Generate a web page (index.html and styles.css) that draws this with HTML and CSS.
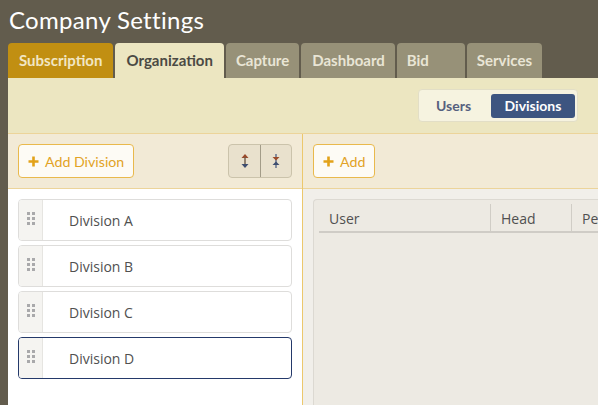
FILE: index.html
```html
<!DOCTYPE html>
<html>
<head>
<meta charset="utf-8">
<link rel="stylesheet" href="styles.css">
</head>
<body>
<h1 class="title">Company Settings</h1>
<div class="tabs">
  <div class="tab tab-sub">Subscription</div>
  <div class="tab tab-active">Organization</div>
  <div class="tab">Capture</div>
  <div class="tab tab-dash">Dashboard</div>
  <div class="tab">Bid</div>
  <div class="tab">Services</div>
</div>
<div class="panel">
  <div class="topbar">
    <div class="toggle">
      <span class="toggle-btn">Users</span>
      <span class="toggle-btn toggle-on">Divisions</span>
    </div>
  </div>
  <div class="main">
    <div class="left">
      <div class="toolbar">
        <button class="add-btn"><svg class="plus" width="11" height="11" viewBox="0 0 11 11"><path d="M5.5 0.5 V10.5 M0.5 5.5 H10.5" stroke="#e2a21a" stroke-width="2.6"/></svg>Add Division</button>
        <div class="sort-group">
          <button class="sort-btn">
            <svg width="10" height="16" viewBox="0 0 10 16"><path d="M5 1 L8.5 5 H1.5 Z" fill="#9a4a2a"/><rect x="4.3" y="4" width="1.4" height="8" fill="#6b5a4a"/><path d="M5 15 L8.5 11 H1.5 Z" fill="#3e4e70"/></svg>
          </button>
          <button class="sort-btn">
            <svg width="10" height="16" viewBox="0 0 10 16"><rect x="4.3" y="1" width="1.4" height="14" fill="#5a6a8a"/><path d="M1.5 4 H8.5 L5 7.5 Z" fill="#9a4a2a"/><path d="M1.5 12 H8.5 L5 8.5 Z" fill="#3e4e70"/></svg>
          </button>
        </div>
      </div>
      <div class="list">
        <div class="item"><span class="handle"><i></i><i></i><i></i><i></i><i></i><i></i></span><span class="item-name">Division A</span></div>
        <div class="item"><span class="handle"><i></i><i></i><i></i><i></i><i></i><i></i></span><span class="item-name">Division B</span></div>
        <div class="item"><span class="handle"><i></i><i></i><i></i><i></i><i></i><i></i></span><span class="item-name">Division C</span></div>
        <div class="item item-selected"><span class="handle"><i></i><i></i><i></i><i></i><i></i><i></i></span><span class="item-name">Division D</span></div>
      </div>
    </div>
    <div class="right">
      <div class="toolbar">
        <button class="add-btn"><svg class="plus" width="11" height="11" viewBox="0 0 11 11"><path d="M5.5 0.5 V10.5 M0.5 5.5 H10.5" stroke="#e2a21a" stroke-width="2.6"/></svg>Add</button>
      </div>
      <div class="content">
        <div class="table">
          <div class="thead">
            <div class="th th-user">User</div>
            <div class="th th-head">Head</div>
            <div class="th th-per">Permissions</div>
          </div>
        </div>
      </div>
    </div>
  </div>
</div>
</body>
</html>
```
FILE: styles.css
```css
* { box-sizing: border-box; }
html, body { margin: 0; padding: 0; }
body {
  background: #625c4d;
  font-family: Lato, "Open Sans", sans-serif;
  width: 598px;
  height: 405px;
  overflow: hidden;
}
.title {
  margin: 0;
  height: 43px;
  padding: 5px 0 0 9px;
  font-weight: 400;
  font-size: 24px;
  line-height: 30px;
  color: #ffffff;
  letter-spacing: 0.3px;
}
.tabs {
  display: flex;
  gap: 2px;
  margin-left: 8px;
  height: 35px;
}
.tab {
  height: 35px;
  padding: 0 10px;
  min-width: 68px;
  border-radius: 4px 4px 0 0;
  background: #979178;
  color: #e9e5d5;
  font-weight: 700;
  font-size: 15px;
  line-height: 35px;
  white-space: nowrap;
}
.tab-sub { background: #c18f12; color: #f1e6c4; padding: 0 11px; }
.tab-dash { padding: 0 10px 0 11px; }
.tab-active { background: #ece6c1; color: #4b4a44; padding: 0 11px; }
.panel {
  margin-left: 8px;
  background: #ece6c1;
  height: 327px;
  display: flex;
  flex-direction: column;
}
.topbar {
  height: 56px;
  border-bottom: 1px solid #ecd49a;
  display: flex;
  justify-content: flex-end;
  align-items: flex-start;
  padding: 11px 20px 0 0;
}
.toggle {
  display: flex;
  align-items: center;
  width: 160px;
  height: 33px;
  background: #f6f3e0;
  border: 1px solid #e2dec6;
  border-radius: 4px;
  padding: 0 2px 0 4px;
  justify-content: space-between;
}
.toggle-btn {
  font-weight: 700;
  font-size: 14px;
  color: #55607e;
  padding: 0 13px;
  line-height: 24px;
  height: 24px;
}
.toggle-on {
  background: #3d5580;
  color: #ffffff;
  border-radius: 3px;
  width: 84px;
  text-align: center;
  padding: 0;
}
.main {
  flex: 1;
  display: flex;
  min-height: 0;
}
.left {
  width: 295px;
  border-right: 1px solid #ecc86c;
  background: #ffffff;
  display: flex;
  flex-direction: column;
}
.right {
  flex: 1;
  background: #f1efea;
  display: flex;
  flex-direction: column;
  min-width: 0;
}
.toolbar {
  height: 55px;
  background: #f2ead6;
  border-bottom: 1px solid #ecd49a;
  display: flex;
  align-items: center;
  justify-content: space-between;
  padding: 0 10px 0 10px;
}
.add-btn {
  height: 34px;
  padding: 0 9px 0 9px;
  background: #fdfbf5;
  border: 1px solid #e9b94c;
  border-radius: 4px;
  color: #e2a326;
  font-family: Lato, "Open Sans", sans-serif;
  font-size: 14.2px;
  display: flex;
  align-items: center;
  gap: 6px;
}
.plus { display: block; }
.sort-group {
  display: flex;
  height: 34px;
  border: 1px solid #cbc3ab;
  border-radius: 4px;
  background: #e9e1cd;
  overflow: hidden;
}
.sort-btn {
  width: 31px;
  height: 100%;
  border: 0;
  background: transparent;
  display: flex;
  align-items: center;
  justify-content: center;
  padding: 0;
}
.sort-btn + .sort-btn { border-left: 1px solid #a39c88; }
.list {
  padding: 10px 10px 0 10px;
  display: flex;
  flex-direction: column;
  gap: 4px;
}
.item {
  height: 42px;
  border: 1px solid #dedddb;
  border-radius: 4px;
  display: flex;
  align-items: stretch;
  overflow: hidden;
  background: #ffffff;
}
.item-selected { border-color: #24396a; }
.handle {
  width: 24px;
  background: #f5f4f1;
  border-right: 1px solid #e6e5e1;
  display: grid;
  grid-template-columns: 3px 3px;
  grid-auto-rows: 3px;
  gap: 2px;
  align-content: start;
  justify-content: center;
  padding-top: 12px;
}
.handle i {
  display: block;
  background: #a9a9ab;
}
.item-name {
  padding-left: 26px;
  line-height: 42px;
  color: #505050;
  font-family: "Open Sans", Lato, sans-serif;
  font-size: 14px;
}
.content {
  flex: 1;
  padding: 10px 0 0 10px;
}
.table {
  height: 100%;
  background: #edeae3;
  border: 1px solid #dcd9d2;
  border-right: 0;
  border-bottom: 0;
  border-radius: 4px 0 0 0;
  padding: 4px 0 0 5px;
}
.thead {
  display: flex;
  height: 29px;
  border-bottom: 2px solid #cfccc6;
}
.th {
  font-family: "Open Sans", Lato, sans-serif;
  font-size: 14px;
  color: #505050;
  line-height: 29px;
  padding-left: 10px;
  white-space: nowrap;
  overflow: hidden;
}
.th-user { width: 172px; border-right: 1px solid #d0cdc6; }
.th-head { width: 81px; border-right: 1px solid #d0cdc6; }
.th-per { flex: 1; }
```
